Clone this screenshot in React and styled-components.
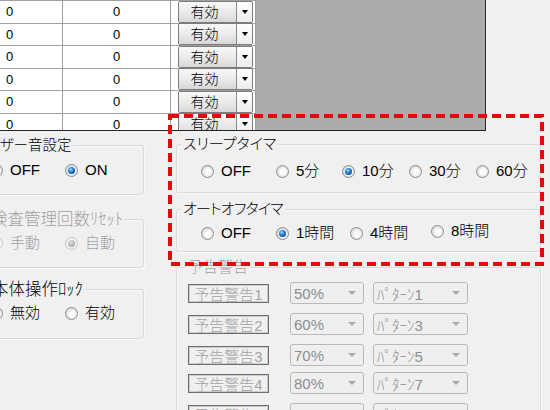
import React from "react";
import styled, { createGlobalStyle } from "styled-components";

const GlobalStyle = createGlobalStyle`
  html, body {
    margin: 0;
    padding: 0;
    background: #f0f0f0;
  }
`;

const Screen = styled.div`
  position: relative;
  width: 550px;
  height: 410px;
  overflow: hidden;
  background: #f0f0f0;
  font-family: "Liberation Sans", "Noto Sans CJK JP", sans-serif;
  font-weight: 300;
  color: #000;
`;

/* ---- data grid ---- */

const Grid = styled.div`
  box-sizing: border-box;
  width: 487px;
  height: 131px;
  margin-left: -1px;
  border: 1px solid #262626;
  border-top: 0;
  background: #ababab;
  overflow: hidden;
`;

const GridBody = styled.div`
  width: 256px;
  border-top: 1px solid #a0a0a0;
`;

const GridRow = styled.div`
  display: flex;
  height: 22.5px;
`;

const Cell = styled.div`
  box-sizing: border-box;
  flex: none;
  width: ${(p) => p.$w}px;
  height: 100%;
  display: flex;
  align-items: center;
  justify-content: ${(p) => (p.$center ? "center" : "flex-start")};
  padding-left: ${(p) => (p.$center ? 0 : 6)}px;
  background: #fff;
  border-right: 1px solid #a0a0a0;
  border-bottom: 1px solid #a0a0a0;
  font-size: 13px;
`;

const CellCombo = styled.div`
  flex: 1;
  display: flex;
  height: 20px;
  margin: 0 2px 0 1px;
  border: 1px solid #7b7b7b;
  border-radius: 2px;
  overflow: hidden;
`;

const ComboFace = styled.div`
  flex: 1;
  display: flex;
  align-items: center;
  justify-content: center;
  padding-right: 6px;
  background: linear-gradient(#f8f8f8, #ebebeb 50%, #d8d8d8);
  font-size: 14px;
  line-height: 1;
`;

const ComboDrop = styled.div`
  width: 15px;
  display: flex;
  align-items: center;
  justify-content: center;
  border-left: 1px solid #8a8a8a;
  background: linear-gradient(#ffffff, #ececec);

  &::after {
    content: "";
    border-left: 3.5px solid transparent;
    border-right: 3.5px solid transparent;
    border-top: 4px solid #000;
  }
`;

/* ---- settings area ---- */

const Body = styled.div`
  display: flex;
  align-items: flex-start;
`;

const LeftCol = styled.div`
  flex: none;
  width: 165px;
  margin-left: -21px;
`;

const RightCol = styled.div`
  flex: none;
  width: 365px;
  margin-left: 32px;
`;

const Group = styled.div`
  box-sizing: border-box;
  height: ${(p) => p.$h}px;
  margin-top: ${(p) => p.$mt}px;
  border: 1px solid #d3dae0;
  border-radius: 3px;
  box-shadow: inset 1px 1px 0 #fafafa, 1px 1px 0 #fafafa;
`;

const Caption = styled.div`
  width: fit-content;
  height: 16px;
  margin: -9px 0 0 ${(p) => 4 + (p.$shift || 0)}px;
  padding: 0 2px;
  background: #f0f0f0;
  font-size: ${(p) => p.$size || 15}px;
  line-height: 16px;
  letter-spacing: ${(p) => p.$track || 0}px;
  font-feature-settings: "palt";
  white-space: nowrap;
  color: ${(p) => (p.$off ? "#a2a2a2" : "#000")};
`;

const RadioRow = styled.div`
  display: flex;
  align-items: center;
  height: 16px;
  margin-top: ${(p) => p.$mt}px;
  padding-left: ${(p) => p.$pl}px;
`;

const RadioItem = styled.label`
  flex: none;
  display: flex;
  align-items: center;
  gap: 7px;
  width: ${(p) => (p.$w ? `${p.$w}px` : "auto")};
  margin-bottom: ${(p) => (p.$lift ? 4 : 0)}px;
  font-size: 15px;
  line-height: 16px;
  white-space: nowrap;
  color: ${(p) => (p.$off ? "#a2a2a2" : "#000")};
`;

const RadioDot = styled.span`
  box-sizing: border-box;
  flex: none;
  width: 13px;
  height: 13px;
  border-radius: 50%;
  display: flex;
  align-items: center;
  justify-content: center;
  border: 1px solid ${(p) => (p.$off ? "#c6c6c6" : "#8a8c8e")};
  background: ${(p) =>
    p.$off
      ? "radial-gradient(circle, #f7f7f7 0 40%, #e9e9e9 100%)"
      : "radial-gradient(circle at 55% 55%, #fbfbfb 0 30%, #e3e3e3 60%, #cbcbcb 100%)"};

  &::after {
    content: "";
    display: ${(p) => (p.$on ? "block" : "none")};
    width: 7px;
    height: 7px;
    border-radius: 50%;
    background: ${(p) =>
      p.$off
        ? "radial-gradient(circle at 40% 35%, #e4e4e4 0, #b4b4b4 55%, #8e8e8e 100%)"
        : "radial-gradient(circle at 40% 35%, #9fdcff 0, #2f8ae0 35%, #0d4b98 75%, #082f66 100%)"};
  }
`;

const WarnRow = styled.div`
  display: flex;
  align-items: center;
  height: 22px;
  margin-top: ${(p) => p.$mt}px;
  padding-left: 11px;
`;

const WarnTag = styled.div`
  box-sizing: border-box;
  flex: none;
  width: 81px;
  height: 19px;
  display: flex;
  align-items: center;
  justify-content: center;
  border: 1px solid #6e6e6e;
  box-shadow: inset 0 0 0 1px #cdcdcd;
  font-size: 15px;
  color: #a4a4a4;
  white-space: nowrap;
`;

const Select = styled.div`
  box-sizing: border-box;
  flex: none;
  width: ${(p) => p.$w}px;
  height: 22px;
  margin-left: ${(p) => p.$ml}px;
  display: flex;
  align-items: center;
  justify-content: space-between;
  padding: 0 7px 0 3px;
  border: 1px solid #b9b9b9;
  border-radius: 3px;
  background: #efefef;
  font-size: 15px;
  color: #8e8e8e;
  white-space: nowrap;

  &::after {
    content: "";
    border-left: 4px solid transparent;
    border-right: 4px solid transparent;
    border-top: 4px solid #a9a9a9;
  }
`;

const Highlight = styled.svg`
  position: absolute;
  left: 168px;
  top: 114px;
  width: 376px;
  height: 152px;
  pointer-events: none;
`;

const gridRows = [1, 2, 3, 4, 5, 6];

const sleepOptions = [
  { label: "OFF", w: 75 },
  { label: "5分", w: 66 },
  { label: "10分", w: 67, on: true },
  { label: "30分", w: 67 },
  { label: "60分" },
];

const autoOffOptions = [
  { label: "OFF", w: 75 },
  { label: "1時間", w: 74, on: true },
  { label: "4時間", w: 81 },
  { label: "8時間", lift: true },
];

const warnings = [
  { tag: "予告警告1", level: "50%", pattern: "ﾊﾟﾀｰﾝ1", mt: 7 },
  { tag: "予告警告2", level: "60%", pattern: "ﾊﾟﾀｰﾝ3", mt: 9 },
  { tag: "予告警告3", level: "70%", pattern: "ﾊﾟﾀｰﾝ5", mt: 9 },
  { tag: "予告警告4", level: "80%", pattern: "ﾊﾟﾀｰﾝ7", mt: 6 },
  { tag: "予告警告5", level: "90%", pattern: "ﾊﾟﾀｰﾝ9", mt: 9 },
];

const Radio = ({ label, on, off, w, lift }) => (
  <RadioItem $w={w} $off={off} $lift={lift}>
    <RadioDot $on={on} $off={off} />
    {label}
  </RadioItem>
);

export default function App() {
  return (
    <Screen>
      <GlobalStyle />

      <Grid>
        <GridBody>
          {gridRows.map((r) => (
            <GridRow key={r}>
              <Cell $w={63}>0</Cell>
              <Cell $w={108} $center>
                0
              </Cell>
              <Cell $w={85}>
                <CellCombo>
                  <ComboFace>有効</ComboFace>
                  <ComboDrop />
                </CellCombo>
              </Cell>
            </GridRow>
          ))}
        </GridBody>
      </Grid>

      <Body>
        <LeftCol>
          <Group $mt={14} $h={50}>
            <Caption $size={14.5} $shift={1}>
              ブザー音設定
            </Caption>
            <RadioRow $mt={9} $pl={10}>
              <Radio label="OFF" w={75} />
              <Radio label="ON" on />
            </RadioRow>
          </Group>

          <Group $mt={24} $h={49}>
            <Caption $size={16.5} $shift={5} $off>
              検査管理回数ﾘｾｯﾄ
            </Caption>
            <RadioRow $mt={8} $pl={10}>
              <Radio label="手動" w={75} off />
              <Radio label="自動" on off />
            </RadioRow>
          </Group>

          <Group $mt={21} $h={50}>
            <Caption $size={16.5} $shift={6}>
              本体操作ﾛｯｸ
            </Caption>
            <RadioRow $mt={8} $pl={10}>
              <Radio label="無効" w={75} />
              <Radio label="有効" />
            </RadioRow>
          </Group>
        </LeftCol>

        <RightCol>
          <Group $mt={13} $h={49}>
            <Caption>スリープタイマ</Caption>
            <RadioRow $mt={11} $pl={24}>
              {sleepOptions.map((o) => (
                <Radio key={o.label} {...o} />
              ))}
            </RadioRow>
          </Group>

          <Group $mt={16} $h={43}>
            <Caption $track={-0.8}>オートオフタイマ</Caption>
            <RadioRow $mt={8} $pl={24}>
              {autoOffOptions.map((o) => (
                <Radio key={o.label} {...o} />
              ))}
            </RadioRow>
          </Group>

          <Group $mt={15} $h={200}>
            <Caption $shift={5} $off>
              予告警告
            </Caption>
            {warnings.map((w) => (
              <WarnRow key={w.tag} $mt={w.mt}>
                <WarnTag>{w.tag}</WarnTag>
                <Select $w={74} $ml={21}>
                  {w.level}
                </Select>
                <Select $w={95} $ml={9}>
                  {w.pattern}
                </Select>
              </WarnRow>
            ))}
          </Group>
        </RightCol>
      </Body>

      <Highlight viewBox="0 0 376 152">
        <rect
          x="2"
          y="2"
          width="372"
          height="148"
          fill="none"
          stroke="#e20a0a"
          strokeWidth="4"
          strokeDasharray="9 5"
        />
      </Highlight>
    </Screen>
  );
}
